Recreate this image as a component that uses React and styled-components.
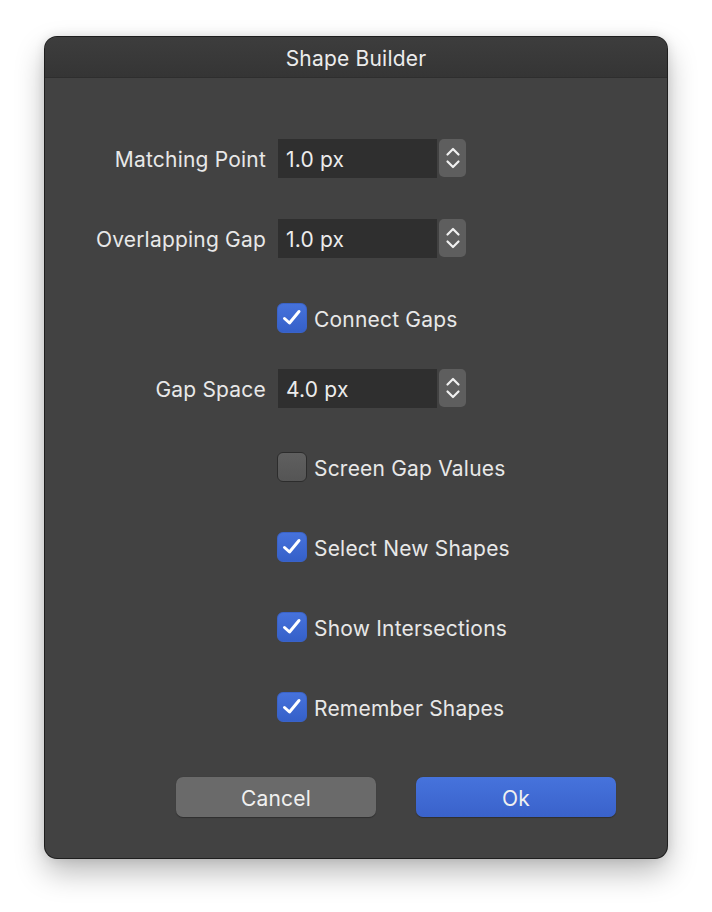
import React from "react";
import styled, { createGlobalStyle } from "styled-components";

const Global = createGlobalStyle`
  html, body { margin: 0; padding: 0; background: #ffffff; }
  body { font-family: Inter, "Noto Sans", sans-serif; -webkit-font-smoothing: antialiased; }
`;

const Page = styled.div`
  width: 712px;
  height: 912px;
  padding: 37px 0 0 45px;
  box-sizing: border-box;
`;

const Window = styled.div`
  width: 622px;
  height: 821px;
  border-radius: 12px;
  background: #424242;
  box-shadow: 0 0 0 1px #1e1e1e, 0 14px 30px rgba(0,0,0,0.28), 0 0 12px rgba(0,0,0,0.12);
  overflow: hidden;
  display: flex;
  flex-direction: column;
`;

const TitleBar = styled.div`
  height: 41px;
  background: linear-gradient(#3d3d3d, #353535);
  border-bottom: 1px solid #2e2e2e;
  display: flex;
  align-items: center;
  justify-content: center;
  color: #ececec;
  font-size: 21px;
  letter-spacing: 0.2px;
  padding-top: 3px;
  box-sizing: border-box;
`;

const Form = styled.div`
  display: flex;
  flex-direction: column;
  padding-top: 60px;
`;

const Row = styled.div`
  display: grid;
  grid-template-columns: 221px auto;
  column-gap: 12px;
  align-items: center;
  height: 40px;
  margin-top: ${p => p.$mt || 0}px;
`;

const Label = styled.div`
  text-align: right;
  color: #e8e8e8;
  font-size: 21px;
  letter-spacing: 0.2px;
  padding-top: 3px;
`;

const FieldGroup = styled.div`
  display: flex;
  align-items: center;
  gap: 2px;
`;

const Field = styled.div`
  width: 159px;
  height: 39px;
  background: #2f2f2f;
  color: #ececec;
  font-size: 21px;
  display: flex;
  align-items: center;
  padding: 3px 0 0 8px;
  box-sizing: border-box;
  letter-spacing: 0.2px;
`;

const Stepper = styled.div`
  width: 27px;
  height: 38px;
  border-radius: 5px;
  background: #5e5e5e;
  display: flex;
  align-items: center;
  justify-content: center;
`;

const CheckRow = styled.label`
  display: flex;
  align-items: center;
  gap: 7px;
  color: #e8e8e8;
  font-size: 21px;
  letter-spacing: 0.2px;
  margin-left: -1px;
`;

const CheckText = styled.span`
  padding-top: 3px;
`;

const Box = styled.span`
  width: 30px;
  height: 30px;
  border-radius: 6px;
  box-sizing: border-box;
  display: flex;
  align-items: center;
  justify-content: center;
  background: ${p => (p.$on ? "linear-gradient(#4672db, #3560c9)" : "linear-gradient(#5f5f5f, #555555)")};
  border: 1px solid ${p => (p.$on ? "#3a63c8" : "#2c2c2c")};
`;

const Buttons = styled.div`
  display: flex;
  gap: 40px;
  padding-left: 131px;
  margin-top: 50px;
`;

const Button = styled.button`
  width: 200px;
  height: 40px;
  border-radius: 7px;
  border: none;
  font-family: inherit;
  font-size: 21px;
  color: #f0f0f0;
  letter-spacing: 0.2px;
  padding-top: 3px;
  background: ${p => (p.$primary ? "linear-gradient(#4673dc, #3a62cb)" : "#6a6a6a")};
  box-shadow: 0 0.5px 1px rgba(0,0,0,0.3);
`;

const Chevrons = () => (
  <svg width="18" height="28" viewBox="0 0 18 28" fill="none" stroke="#f0f0f0" strokeWidth="2.2" strokeLinecap="round" strokeLinejoin="round">
    <path d="M3.5 10.5 L9 5 L14.5 10.5" />
    <path d="M3.5 17.5 L9 23 L14.5 17.5" />
  </svg>
);

const Check = () => (
  <svg width="22" height="22" viewBox="0 0 22 22" fill="none" stroke="#ffffff" strokeWidth="3" strokeLinecap="round" strokeLinejoin="round">
    <path d="M3.5 11.5 L8.5 16 L18 4.5" />
  </svg>
);

const NumberField = ({ value }) => (
  <FieldGroup>
    <Field>{value}</Field>
    <Stepper><Chevrons /></Stepper>
  </FieldGroup>
);

const Checkbox = ({ on, children }) => (
  <CheckRow>
    <Box $on={on}>{on && <Check />}</Box>
    <CheckText>{children}</CheckText>
  </CheckRow>
);

export default function App() {
  return (
    <>
      <Global />
      <Page>
        <Window>
          <TitleBar>Shape Builder</TitleBar>
          <Form>
            <Row>
              <Label>Matching Point</Label>
              <NumberField value="1.0 px" />
            </Row>
            <Row $mt={40}>
              <Label>Overlapping Gap</Label>
              <NumberField value="1.0 px" />
            </Row>
            <Row $mt={40}>
              <span />
              <Checkbox on>Connect Gaps</Checkbox>
            </Row>
            <Row $mt={30}>
              <Label>Gap Space</Label>
              <NumberField value="4.0 px" />
            </Row>
            <Row $mt={39}>
              <span />
              <Checkbox>Screen Gap Values</Checkbox>
            </Row>
            <Row $mt={40}>
              <span />
              <Checkbox on>Select New Shapes</Checkbox>
            </Row>
            <Row $mt={40}>
              <span />
              <Checkbox on>Show Intersections</Checkbox>
            </Row>
            <Row $mt={40}>
              <span />
              <Checkbox on>Remember Shapes</Checkbox>
            </Row>
            <Buttons>
              <Button>Cancel</Button>
              <Button $primary>Ok</Button>
            </Buttons>
          </Form>
        </Window>
      </Page>
    </>
  );
}
